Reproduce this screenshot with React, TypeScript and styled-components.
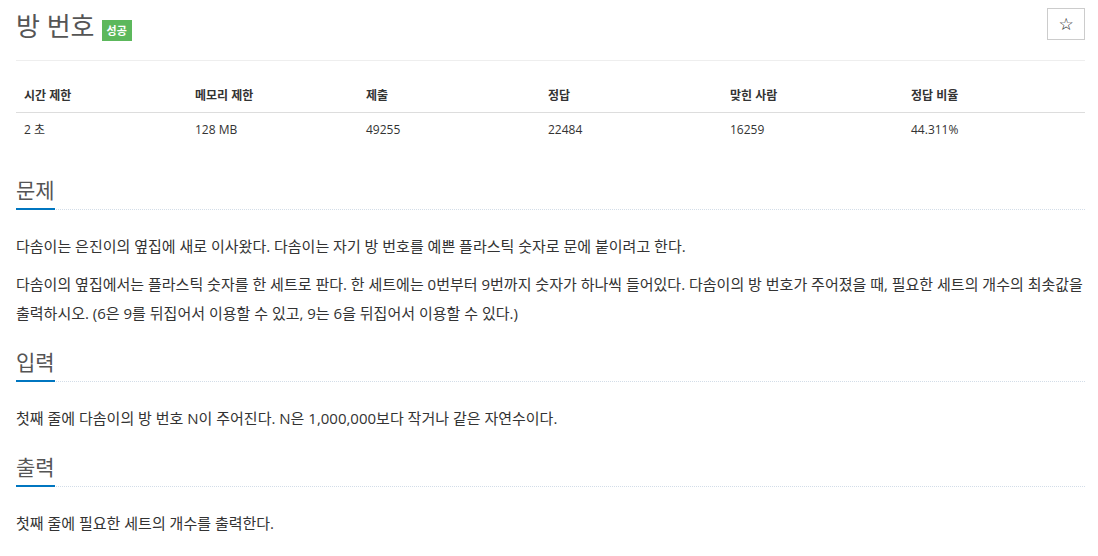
import React from 'react';
import styled, { createGlobalStyle } from 'styled-components';

const GlobalStyle = createGlobalStyle`
  body {
    margin: 0;
    background: #fff;
    color: #333;
    font-family: 'Open Sans', 'Noto Sans CJK KR', sans-serif;
    font-size: 14px;
  }
`;

const Page = styled.div`
  padding: 8px 13px 0 16px;
`;

const TitleRow = styled.div`
  display: flex;
  justify-content: space-between;
  align-items: flex-start;
`;

const Title = styled.h1`
  display: flex;
  align-items: center;
  margin: 2px 0 0;
  font-size: 26px;
  line-height: 30px;
  font-weight: 400;
  color: #555;
`;

const Badge = styled.span`
  display: inline-block;
  margin: 10px 0 0 7px;
  padding: 0 5px;
  height: 21px;
  line-height: 21px;
  background: #5cb85c;
  color: #fff;
  font-size: 11px;
  font-weight: 700;
`;

const StarButton = styled.button`
  width: 38px;
  height: 32px;
  padding: 0;
  border: 1px solid #ccc;
  background: #fff;
  color: #222;
  font-size: 17px;
  line-height: 1;
  font-family: 'DejaVu Sans', sans-serif;
  cursor: pointer;
`;

const Rule = styled.hr`
  margin: 19px 0 18px;
  border: 0;
  border-top: 1px solid #eee;
`;

const Table = styled.table`
  width: 100%;
  table-layout: fixed;
  border-collapse: collapse;
  margin-bottom: 28px;
  font-size: 12px;
  line-height: 17px;
`;

const Th = styled.th<{ $w?: number }>`
  box-sizing: border-box;
  width: ${p => (p.$w ? `${p.$w}px` : 'auto')};
  padding: 8px;
  text-align: left;
  font-weight: 700;
  border-bottom: 1px solid #ddd;
`;

const Td = styled.td`
  padding: 8px;
  color: #333;
`;

const Section = styled.section<{ $first?: boolean }>`
  margin-top: ${p => (p.$first ? 0 : 18)}px;
`;

const Headline = styled.div`
  border-bottom: 1px dotted #d3dde8;
`;

const HeadlineText = styled.h2`
  display: inline-block;
  margin: 0 0 -1px;
  padding: 1px 0 3px;
  font-size: 21px;
  line-height: 30px;
  font-weight: 400;
  color: #555;
  border-bottom: 2px solid #0076c0;
`;

const Body = styled.div`
  padding-top: 22px;
`;

const Para = styled.p`
  margin: 0 0 9px;
  font-size: 15px;
  line-height: 29px;
  color: #333;
`;

const stats = [
  { label: '시간 제한', value: '2 초', w: 171 },
  { label: '메모리 제한', value: '128 MB', w: 171 },
  { label: '제출', value: '49255', w: 182 },
  { label: '정답', value: '22484', w: 182 },
  { label: '맞힌 사람', value: '16259', w: 181 },
  { label: '정답 비율', value: '44.311%' },
];

const sections = [
  {
    title: '문제',
    paras: [
      '다솜이는 은진이의 옆집에 새로 이사왔다. 다솜이는 자기 방 번호를 예쁜 플라스틱 숫자로 문에 붙이려고 한다.',
      '다솜이의 옆집에서는 플라스틱 숫자를 한 세트로 판다. 한 세트에는 0번부터 9번까지 숫자가 하나씩 들어있다. 다솜이의 방 번호가 주어졌을 때, 필요한 세트의 개수의 최솟값을 출력하시오. (6은 9를 뒤집어서 이용할 수 있고, 9는 6을 뒤집어서 이용할 수 있다.)',
    ],
  },
  {
    title: '입력',
    paras: ['첫째 줄에 다솜이의 방 번호 N이 주어진다. N은 1,000,000보다 작거나 같은 자연수이다.'],
  },
  {
    title: '출력',
    paras: ['첫째 줄에 필요한 세트의 개수를 출력한다.'],
  },
];

const App: React.FC = () => (
  <>
    <GlobalStyle />
    <Page>
      <TitleRow>
        <Title>
          방 번호
          <Badge>성공</Badge>
        </Title>
        <StarButton aria-label="즐겨찾기">☆</StarButton>
      </TitleRow>
      <Rule />

      <Table>
        <thead>
          <tr>
            {stats.map(s => (
              <Th key={s.label} $w={s.w}>
                {s.label}
              </Th>
            ))}
          </tr>
        </thead>
        <tbody>
          <tr>
            {stats.map(s => (
              <Td key={s.label}>{s.value}</Td>
            ))}
          </tr>
        </tbody>
      </Table>

      {sections.map((sec, i) => (
        <Section key={sec.title} $first={i === 0}>
          <Headline>
            <HeadlineText>{sec.title}</HeadlineText>
          </Headline>
          <Body>
            {sec.paras.map(p => (
              <Para key={p}>{p}</Para>
            ))}
          </Body>
        </Section>
      ))}
    </Page>
  </>
);

export default App;
